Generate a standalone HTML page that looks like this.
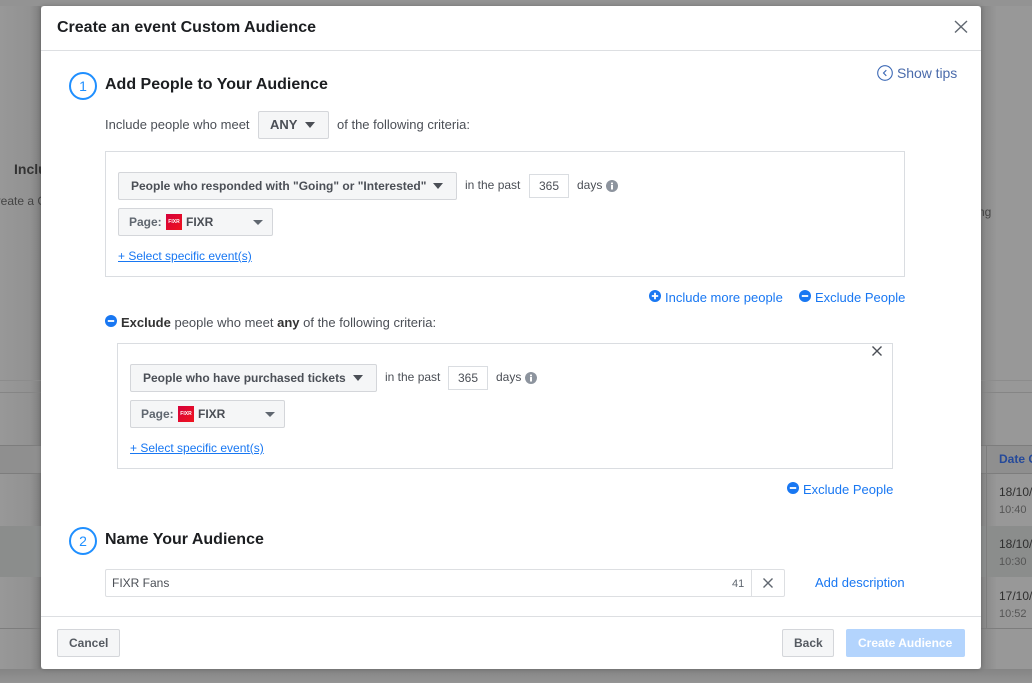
<!DOCTYPE html>
<html><head><meta charset="utf-8">
<style>
*{box-sizing:border-box}
html,body{margin:0;padding:0;width:1032px;height:683px;overflow:hidden;background:#989898;font-family:"Liberation Sans",sans-serif;font-size:12px;color:#4b4f56}
.a{position:absolute;white-space:nowrap}
.m{font-size:13px}
.l{position:absolute;height:1px;background:#7d7d7d}
.btn{position:absolute;background:#f5f6f7;border:1px solid #d4d6da;border-radius:2px}
.box{position:absolute;border:1px solid #dadde1;background:#fff}
.blue{color:#1877f2}
.b{font-weight:bold}
.tri{position:absolute;width:0;height:0;border-left:5.5px solid transparent;border-right:5.5px solid transparent;border-top:6px solid #4b4f56}
.tri2{position:absolute;width:0;height:0;border-left:5px solid transparent;border-right:5px solid transparent;border-top:5px solid #606770}
.logo{position:absolute;width:16px;height:16px;background:linear-gradient(135deg,#d4003a,#f0141e);color:#fff;font-size:5px;line-height:16px;text-align:center;font-weight:bold}
.num{position:absolute;width:28px;height:28px;border:2px solid #1f8fff;border-radius:50%;color:#1f8fff;font-size:14px;line-height:24px;text-align:center}
svg{position:absolute;display:block}
</style></head><body>

<div class="a" style="left:0;top:0;width:41px;height:683px;background:linear-gradient(90deg,#989898 0,#929292 30px,#7f7f7f 41px)"></div>
<div class="a" style="left:981px;top:0;width:51px;height:683px;background:linear-gradient(90deg,#858585 0,#989898 16px)"></div>
<div class="a" style="left:0;top:669px;width:1032px;height:14px;background:linear-gradient(180deg,#848484,#949494)"></div>
<div class="a" style="left:0;top:0;width:1032px;height:6px;background:#939393"></div>

<div class="a" style="left:0;top:446px;width:1032px;height:28px;background:#8f8f8f"></div>
<div class="a" style="left:0;top:526px;width:1032px;height:51px;background:#8b8d8c"></div>
<div class="l" style="left:0;top:380px;width:1032px;background:#8c8c8c"></div>
<div class="l" style="left:0;top:392px;width:1032px;background:#858585"></div>
<div class="l" style="left:0;top:445px;width:1032px"></div>
<div class="l" style="left:0;top:473px;width:1032px"></div>
<div class="l" style="left:0;top:628px;width:1032px"></div>
<div class="a" style="left:986px;top:445px;width:1px;height:184px;background:#7d7d7d"></div>

<div class="a b" style="left:14px;top:161px;font-size:14px;color:#333">Include</div>
<div class="a" style="left:-12px;top:194px;color:#444">Create a Custom</div>
<div class="a" style="left:972px;top:205px;color:#444">ting</div>
<div class="a b" style="left:999px;top:452px;color:#25499a">Date Created</div>
<div class="a" style="left:999px;top:485px;color:#2f2f2f">18/10/2018</div>
<div class="a" style="left:999px;top:504px;font-size:11px;color:#555">10:40</div>
<div class="a" style="left:999px;top:537px;color:#2f2f2f">18/10/2018</div>
<div class="a" style="left:999px;top:556px;font-size:11px;color:#555">10:30</div>
<div class="a" style="left:999px;top:589px;color:#2f2f2f">17/10/2018</div>
<div class="a" style="left:999px;top:608px;font-size:11px;color:#555">10:52</div>

<!-- modal -->
<div class="a" style="left:41px;top:6px;width:940px;height:663px;background:#fff;border-radius:3px;box-shadow:0 0 4px rgba(0,0,0,.25)"></div>
<div class="a" style="left:41px;top:50px;width:940px;height:1px;background:#dddfe2"></div>
<div class="a" style="left:41px;top:616px;width:940px;height:1px;background:#dddfe2"></div>

<div class="a b" style="left:57px;top:18px;font-size:16px;line-height:19px;color:#1c1e21">Create an event Custom Audience</div>
<svg style="left:954px;top:20px" width="14" height="14" viewBox="0 0 14 14"><path d="M1 1L13 12.5M13 1L1 12.5" stroke="#606770" stroke-width="1.4" fill="none"/></svg>

<svg style="left:877px;top:65px" width="16" height="16" viewBox="0 0 16 16"><circle cx="8" cy="8" r="7.3" fill="none" stroke="#3b68b5" stroke-width="1.1"/><path d="M9.3 5.2L6.5 8l2.8 2.8" fill="none" stroke="#3b68b5" stroke-width="1.1"/></svg>
<div class="a" style="left:897px;top:65px;font-size:14px;line-height:16px;letter-spacing:-.05px;color:#4a6bab">Show tips</div>

<div class="num" style="left:69px;top:72px">1</div>
<div class="a b" style="left:105px;top:75px;font-size:16px;line-height:19px;color:#1c1e21">Add People to Your Audience</div>

<div class="a m" style="left:105px;top:117px;line-height:15px">Include people who meet</div>
<div class="btn" style="left:258px;top:111px;width:71px;height:28px"></div>
<div class="a b" style="left:270px;top:117px;font-size:13px;line-height:16px;color:#4b4f56">ANY</div>
<div class="tri" style="left:305px;top:122px"></div>
<div class="a m" style="left:337px;top:117px;line-height:15px">of the following criteria:</div>

<!-- box 1 -->
<div class="box" style="left:105px;top:151px;width:800px;height:126px"></div>
<div class="btn" style="left:118px;top:172px;width:339px;height:28px"></div>
<div class="a b" style="left:131px;top:179px;line-height:15px;color:#4b4f56">People who responded with "Going" or "Interested"</div>
<div class="tri" style="left:433px;top:183px"></div>
<div class="a" style="left:465px;top:178px;line-height:15px">in the past</div>
<div class="box" style="left:529px;top:174px;width:40px;height:24px;text-align:center;line-height:22px">365</div>
<div class="a" style="left:577px;top:178px;line-height:15px">days</div>
<svg style="left:606px;top:180px" width="12" height="12" viewBox="0 0 12 12"><circle cx="6" cy="6" r="6" fill="#8d949e"/><rect x="5" y="5" width="2" height="4.5" fill="#fff"/><rect x="5" y="2.6" width="2" height="1.7" fill="#fff"/></svg>

<div class="btn" style="left:118px;top:208px;width:155px;height:28px"></div>
<div class="a b" style="left:129px;top:215px;line-height:15px;color:#606770">Page:</div>
<div class="logo" style="left:166px;top:214px">FIXR</div>
<div class="a b" style="left:186px;top:215px;line-height:15px;color:#4b4f56">FIXR</div>
<div class="tri2" style="left:253px;top:220px"></div>
<div class="a blue" style="left:118px;top:249px;line-height:15px;text-decoration:underline">+ Select specific event(s)</div>

<svg style="left:649px;top:290px" width="12" height="12" viewBox="0 0 12 12"><circle cx="6" cy="6" r="6" fill="#1877f2"/><path d="M2.8 6h6.4M6 2.8v6.4" stroke="#fff" stroke-width="1.8"/></svg>
<div class="a blue m" style="left:665px;top:290px;line-height:15px">Include more people</div>
<svg style="left:799px;top:290px" width="12" height="12" viewBox="0 0 12 12"><circle cx="6" cy="6" r="6" fill="#1877f2"/><path d="M2.8 6h6.4" stroke="#fff" stroke-width="1.8"/></svg>
<div class="a blue m" style="left:815px;top:290px;line-height:15px">Exclude People</div>

<svg style="left:105px;top:315px" width="12" height="12" viewBox="0 0 12 12"><circle cx="6" cy="6" r="6" fill="#1877f2"/><path d="M2.8 6h6.4" stroke="#fff" stroke-width="1.8"/></svg>
<div class="a m" style="left:121px;top:315px;line-height:15px"><span class="b" style="color:#333">Exclude</span> people who meet <span class="b" style="color:#333">any</span> of the following criteria:</div>

<!-- box 2 -->
<div class="box" style="left:117px;top:343px;width:776px;height:126px"></div>
<svg style="left:872px;top:346px" width="10" height="10" viewBox="0 0 10 10"><path d="M.5.5l9 9M9.5.5l-9 9" stroke="#4b4f56" stroke-width="1.4" fill="none"/></svg>
<div class="btn" style="left:130px;top:364px;width:247px;height:28px"></div>
<div class="a b" style="left:143px;top:371px;line-height:15px;color:#4b4f56">People who have purchased tickets</div>
<div class="tri" style="left:353px;top:375px"></div>
<div class="a" style="left:385px;top:370px;line-height:15px">in the past</div>
<div class="box" style="left:448px;top:366px;width:40px;height:24px;text-align:center;line-height:22px">365</div>
<div class="a" style="left:496px;top:370px;line-height:15px">days</div>
<svg style="left:525px;top:372px" width="12" height="12" viewBox="0 0 12 12"><circle cx="6" cy="6" r="6" fill="#8d949e"/><rect x="5" y="5" width="2" height="4.5" fill="#fff"/><rect x="5" y="2.6" width="2" height="1.7" fill="#fff"/></svg>

<div class="btn" style="left:130px;top:400px;width:155px;height:28px"></div>
<div class="a b" style="left:141px;top:407px;line-height:15px;color:#606770">Page:</div>
<div class="logo" style="left:178px;top:406px">FIXR</div>
<div class="a b" style="left:198px;top:407px;line-height:15px;color:#4b4f56">FIXR</div>
<div class="tri2" style="left:265px;top:412px"></div>
<div class="a blue" style="left:130px;top:441px;line-height:15px;text-decoration:underline">+ Select specific event(s)</div>

<svg style="left:787px;top:482px" width="12" height="12" viewBox="0 0 12 12"><circle cx="6" cy="6" r="6" fill="#1877f2"/><path d="M2.8 6h6.4" stroke="#fff" stroke-width="1.8"/></svg>
<div class="a blue m" style="left:803px;top:482px;line-height:15px">Exclude People</div>

<div class="num" style="left:69px;top:527px">2</div>
<div class="a b" style="left:105px;top:530px;font-size:16px;line-height:19px;color:#1c1e21">Name Your Audience</div>

<div class="box" style="left:105px;top:569px;width:680px;height:28px;border-color:#dddfe2;border-radius:2px"></div>
<div class="a" style="left:751px;top:569px;width:1px;height:28px;background:#dddfe2"></div>
<div class="a" style="left:112px;top:576px;line-height:15px">FIXR Fans</div>
<div class="a" style="left:732px;top:577px;font-size:11px;line-height:14px;color:#606770">41</div>
<svg style="left:763px;top:578px" width="10" height="10" viewBox="0 0 10 10"><path d="M.5.5l9 9M9.5.5l-9 9" stroke="#606770" stroke-width="1.4" fill="none"/></svg>
<div class="a blue m" style="left:815px;top:575px;line-height:15px">Add description</div>

<div class="btn" style="left:57px;top:629px;width:63px;height:28px"></div>
<div class="a b" style="left:69px;top:636px;line-height:15px;color:#555a61">Cancel</div>
<div class="btn" style="left:782px;top:629px;width:52px;height:28px"></div>
<div class="a b" style="left:794px;top:636px;line-height:15px;color:#555a61">Back</div>
<div class="a" style="left:846px;top:629px;width:119px;height:28px;background:#b3d4fd;border-radius:2px"></div>
<div class="a b" style="left:858px;top:636px;line-height:15px;color:#fff">Create Audience</div>

</body></html>
